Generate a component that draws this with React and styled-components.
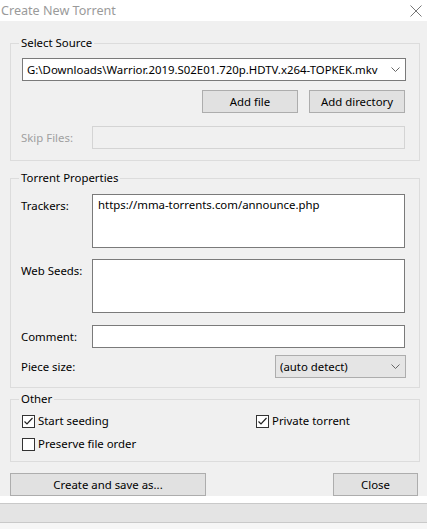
import React from 'react';
import styled, { createGlobalStyle } from 'styled-components';

const GlobalStyle = createGlobalStyle`
  html, body {
    margin: 0;
    padding: 0;
    background: #ffffff;
  }
  * {
    box-sizing: border-box;
  }
`;

const Window = styled.div`
  width: 427px;
  height: 529px;
  display: flex;
  flex-direction: column;
  font-family: 'Noto Sans', 'Open Sans', sans-serif;
  font-size: 11.4px;
  color: #000;
  overflow: hidden;
`;

const TitleBar = styled.div`
  height: 21px;
  flex: none;
  display: flex;
  align-items: center;
  justify-content: space-between;
  background: #fff;
  padding: 0 5px 0 1px;
`;

const Title = styled.span`
  font-size: 12.6px;
  color: #9a9a9a;
  line-height: 21px;
`;

const Body = styled.div`
  background: #f0f0f0;
  padding: 15px 7px 0 10px;
  display: flex;
  flex-direction: column;
`;

const Group = styled.fieldset`
  margin: 0 0 ${(p) => p.$gap ?? 10}px 0;
  border: 1px solid #dcdcdc;
  border-radius: 0;
  padding: ${(p) => p.$padTop ?? 8}px 14px ${(p) => p.$padBottom ?? 11}px 11px;
  min-width: 0;
  display: flex;
  flex-direction: column;
`;

const Legend = styled.legend`
  padding: 0 2px;
  margin-left: -3px;
  line-height: 14px;
`;

const Combo = styled.div`
  height: 23px;
  display: flex;
  align-items: center;
  justify-content: space-between;
  background: ${(p) => (p.$flat ? '#e5e5e5' : '#fff')};
  border: 1px solid ${(p) => (p.$flat ? '#adadad' : '#7a7a7a')};
  padding: 0 5px 0 4px;
  width: ${(p) => p.$width || 'auto'};
  margin-left: ${(p) => (p.$right ? 'auto' : '0')};
  margin-right: -1px;
`;

const ComboText = styled.span`
  white-space: nowrap;
  overflow: hidden;
`;

const ButtonRow = styled.div`
  display: flex;
  justify-content: ${(p) => (p.$spread ? 'space-between' : 'flex-end')};
  gap: 11px;
  margin-top: ${(p) => p.$top || 0}px;
`;

const Button = styled.button`
  width: ${(p) => p.$width}px;
  height: 23px;
  background: #e1e1e1;
  border: 1px solid #adadad;
  border-radius: 0;
  font-family: inherit;
  font-size: 11.4px;
  color: #000;
  padding: 0;
`;

const Row = styled.div`
  display: flex;
  align-items: ${(p) => (p.$top ? 'flex-start' : 'center')};
  margin-top: ${(p) => p.$mt || 0}px;
`;

const Label = styled.span`
  width: 71px;
  flex: none;
  margin-left: -1px;
  color: ${(p) => (p.$disabled ? '#a0a0a0' : '#000')};
  padding-top: ${(p) => (p.$top ? 4 : 0)}px;
`;

const Field = styled.div`
  flex: 1;
  height: ${(p) => p.$height || 23}px;
  background: ${(p) => (p.$disabled ? '#f0f0f0' : '#fff')};
  border: 1px solid ${(p) => (p.$disabled ? '#d4d4d4' : '#7a7a7a')};
  padding: 1px 5px;
  line-height: 17px;
`;

const CheckGrid = styled.div`
  display: grid;
  grid-template-columns: 234px 1fr;
  row-gap: 7px;
  margin-top: 4px;
`;

const Check = styled.label`
  display: flex;
  align-items: center;
  gap: 3px;
  line-height: 16px;
`;

const Box = styled.span`
  width: 13px;
  height: 13px;
  border: 1px solid #333;
  background: #fff;
  display: flex;
  align-items: center;
  justify-content: center;
`;

const Footer = styled.div`
  margin-top: 11px;
  padding-right: 2px;
`;

const StatusBar = styled.div`
  margin-top: 7px;
  height: 20px;
  flex: none;
  background: #e4e4e4;
  border-top: 1px solid #c9c9c9;
  border-bottom: 1px solid #c9c9c9;
`;

const Bottom = styled.div`
  flex: 1;
  background: #f6f6f6;
`;

const Chevron = () => (
  <svg width="9" height="5" viewBox="0 0 9 5">
    <path d="M0.5 0.5 L4.5 4.5 L8.5 0.5" fill="none" stroke="#666" strokeWidth="1" />
  </svg>
);

const CloseIcon = () => (
  <svg width="12" height="12" viewBox="0 0 12 12">
    <path d="M0.5 0.5 L11.5 11.5 M11.5 0.5 L0.5 11.5" stroke="#777" strokeWidth="1" />
  </svg>
);

const CheckBox = ({ checked, children }) => (
  <Check>
    <Box>
      {checked && (
        <svg width="11" height="11" viewBox="0 0 11 11">
          <path d="M1.5 5.5 L4 8 L9.5 2" fill="none" stroke="#222" strokeWidth="1.2" />
        </svg>
      )}
    </Box>
    {children}
  </Check>
);

export default function App() {
  return (
    <>
      <GlobalStyle />
      <Window>
        <TitleBar>
          <Title>Create New Torrent</Title>
          <CloseIcon />
        </TitleBar>
        <Body>
          <Group $padBottom={11}>
            <Legend>Select Source</Legend>
            <Combo>
              <ComboText>G:\Downloads\Warrior.2019.S02E01.720p.HDTV.x264-TOPKEK.mkv</ComboText>
              <Chevron />
            </Combo>
            <ButtonRow $top={9}>
              <Button $width={96}>Add file</Button>
              <Button $width={96}>Add directory</Button>
            </ButtonRow>
            <Row $mt={13}>
              <Label $disabled>Skip Files:</Label>
              <Field $disabled />
            </Row>
          </Group>

          <Group $gap={4} $padBottom={9}>
            <Legend>Torrent Properties</Legend>
            <Row $top $mt={1}>
              <Label $top>Trackers:</Label>
              <Field $height={54}>https://mma-torrents.com/announce.php</Field>
            </Row>
            <Row $top $mt={11}>
              <Label $top>Web Seeds:</Label>
              <Field $height={54} />
            </Row>
            <Row $mt={12}>
              <Label>Comment:</Label>
              <Field />
            </Row>
            <Row $mt={7}>
              <Label>Piece size:</Label>
              <Combo $flat $right $width="131px">
                <ComboText>(auto detect)</ComboText>
                <Chevron />
              </Combo>
            </Row>
          </Group>

          <Group $gap={0} $padTop={3} $padBottom={9}>
            <Legend>Other</Legend>
            <CheckGrid>
              <CheckBox checked>Start seeding</CheckBox>
              <CheckBox checked>Private torrent</CheckBox>
              <CheckBox>Preserve file order</CheckBox>
            </CheckGrid>
          </Group>

          <Footer>
            <ButtonRow $spread>
              <Button $width={196}>Create and save as...</Button>
              <Button $width={85}>Close</Button>
            </ButtonRow>
          </Footer>
        </Body>
        <StatusBar />
        <Bottom />
      </Window>
    </>
  );
}
